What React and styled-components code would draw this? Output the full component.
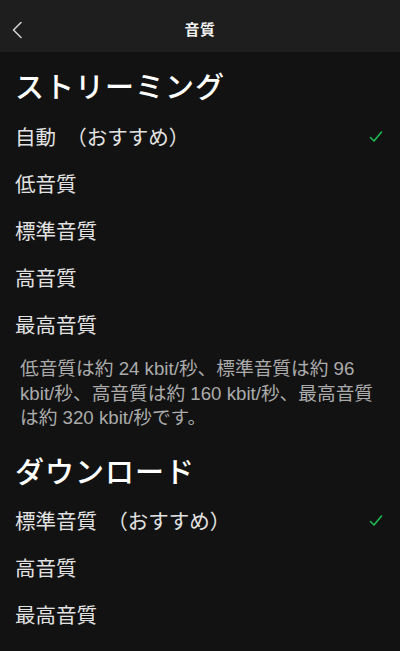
import React from "react"
import styled, { createGlobalStyle } from "styled-components"

const GlobalStyle = createGlobalStyle`
  html, body {
    margin: 0;
    padding: 0;
    background: #121212;
  }
  body {
    font-family: "Noto Sans CJK JP", "Noto Sans", sans-serif;
    -webkit-font-smoothing: antialiased;
  }
`

const streaming = [
  { label: "自動　（おすすめ）", checked: true },
  { label: "低音質" },
  { label: "標準音質" },
  { label: "高音質" },
  { label: "最高音質" },
]

const download = [
  { label: "標準音質　（おすすめ）", checked: true },
  { label: "高音質" },
  { label: "最高音質" },
]

const BackIcon = () => (
  <svg width="12" height="18" viewBox="0 0 12 18">
    <polyline
      points="10,1.5 2.5,9 10,16.5"
      fill="none"
      stroke="#d0d0d0"
      strokeWidth="1.6"
      strokeLinecap="round"
      strokeLinejoin="round"
    />
  </svg>
)

const CheckIcon = () => (
  <svg width="14" height="13" viewBox="0 0 14 13">
    <polyline
      points="1.5,7.5 5,11 12.5,2"
      fill="none"
      stroke="#1db954"
      strokeWidth="1.6"
      strokeLinecap="round"
      strokeLinejoin="round"
    />
  </svg>
)

const OptionList = ({ items }) => (
  <List>
    {items.map(item => (
      <Option key={item.label}>
        <span>{item.label}</span>
        {item.checked && <CheckIcon />}
      </Option>
    ))}
  </List>
)

const App = () => (
  <Page>
    <GlobalStyle />
    <Header>
      <BackButton>
        <BackIcon />
      </BackButton>
      <Title>音質</Title>
    </Header>
    <SectionTitle>ストリーミング</SectionTitle>
    <OptionList items={streaming} />
    <Note>
      低音質は約 24 kbit/秒、標準音質は約 96 kbit/秒、高音質は約 160 kbit/秒、最高音質は約 320 kbit/秒です。
    </Note>
    <SectionTitle $top={20}>ダウンロード</SectionTitle>
    <OptionList items={download} />
  </Page>
)

const Page = styled.div`
  width: 400px;
  min-height: 651px;
  background: #121212;
  color: #fff;
  overflow: hidden;
`

const Header = styled.header`
  position: relative;
  height: 52px;
  background: #1e1e1e;
  display: flex;
  align-items: center;
  justify-content: center;
`

const BackButton = styled.div`
  position: absolute;
  left: 11px;
  top: 21px;
  display: flex;
`

const Title = styled.h1`
  margin: 4px 0 0;
  font-size: 15px;
  font-weight: 700;
  color: #f2f2f2;
  letter-spacing: 0.5px;
`

const SectionTitle = styled.h2`
  margin: 0;
  padding: ${props => props.$top || 14}px 15px 8px;
  font-size: 29px;
  line-height: 38px;
  font-weight: 500;
  color: #fff;
  letter-spacing: 1px;
`

const List = styled.div`
  display: flex;
  flex-direction: column;
`

const Option = styled.div`
  height: 47px;
  padding: 0 17px 0 15px;
  display: flex;
  align-items: center;
  justify-content: space-between;
  font-size: 20.5px;
  color: #e2e2e2;
  svg {
    margin-top: 1px;
  }
`

const Note = styled.p`
  margin: 0;
  padding: 10px 20px 0 20px;
  font-family: "Liberation Sans", "Noto Sans CJK JP", sans-serif;
  font-size: 18.7px;
  line-height: 24.5px;
  color: #ababab;
`

export default App
